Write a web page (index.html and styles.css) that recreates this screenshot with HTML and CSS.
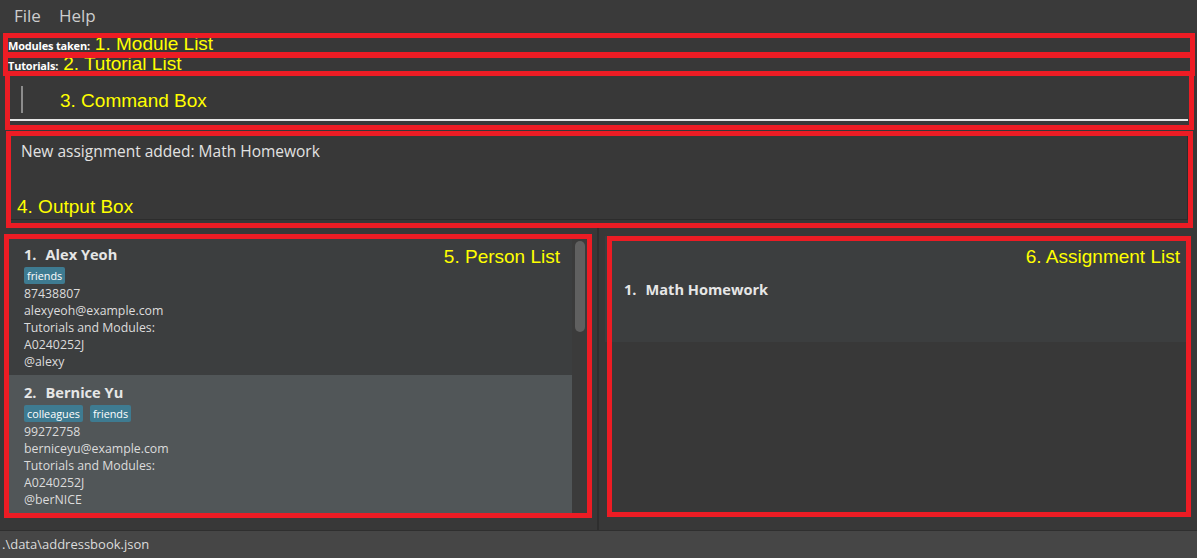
FILE: index.html
```html
<!DOCTYPE html>
<html lang="en">
<head>
<meta charset="utf-8">
<title>Address Book</title>
<link rel="stylesheet" href="styles.css">
</head>
<body>
<div class="app">
  <div class="menubar">
    <span class="menu-item">File</span>
    <span class="menu-item">Help</span>
  </div>

  <div class="info">
    <div class="info-row"><span class="info-key">Modules taken:</span><span class="note note-inline">1. Module List</span></div>
    <div class="info-row"><span class="info-key">Tutorials:</span><span class="note note-inline">2. Tutorial List</span></div>
  </div>

  <div class="command-section">
    <div class="command-field">
      <span class="caret"></span>
      <span class="note note-command">3. Command Box</span>
    </div>
  </div>

  <div class="result-section">
    <div class="result-box">
      <div class="result-text">New assignment added: Math Homework</div>
      <span class="note note-output">4. Output Box</span>
    </div>
  </div>

  <div class="split">
    <div class="pane pane-left">
      <div class="list">
        <div class="cards">
          <div class="card card-even">
            <div class="card-head">
              <div class="card-name"><span class="card-index">1.</span><span>Alex Yeoh</span></div>
              <span class="note note-head">5. Person List</span>
            </div>
            <div class="tags"><span class="tag">friends</span></div>
            <div class="field">87438807</div>
            <div class="field">alexyeoh@example.com</div>
            <div class="field">Tutorials and Modules:</div>
            <div class="field">A0240252J</div>
            <div class="field">@alexy</div>
          </div>
          <div class="card card-odd">
            <div class="card-head">
              <div class="card-name"><span class="card-index">2.</span><span>Bernice Yu</span></div>
            </div>
            <div class="tags"><span class="tag">colleagues</span><span class="tag">friends</span></div>
            <div class="field">99272758</div>
            <div class="field">berniceyu@example.com</div>
            <div class="field">Tutorials and Modules:</div>
            <div class="field">A0240252J</div>
            <div class="field">@berNICE</div>
          </div>
        </div>
        <div class="scrollbar"><div class="thumb"></div></div>
      </div>
    </div>
    <div class="divider"></div>
    <div class="pane pane-right">
      <div class="assign-card">
        <span class="note note-assign">6. Assignment List</span>
        <div class="card-name assign-name"><span class="card-index">1.</span><span>Math Homework</span></div>
      </div>
    </div>
  </div>

  <div class="statusbar">.\data\addressbook.json</div>

  <div class="callouts">
    <div class="callout callout-1"></div>
    <div class="callout callout-2"></div>
    <div class="callout callout-3"></div>
    <div class="callout callout-4"></div>
    <div class="callout callout-5"></div>
    <div class="callout callout-6"></div>
  </div>
</div>
</body>
</html>
```

FILE: styles.css
```css
* { box-sizing: border-box; }

html, body {
  margin: 0;
  padding: 0;
  background: #383838;
}

body {
  font-family: "Open Sans", "Noto Sans", sans-serif;
  color: #dcdcdc;
}

.app {
  position: relative;
  width: 1197px;
  height: 558px;
  overflow: hidden;
  display: flex;
  flex-direction: column;
  background: #383838;
}

/* menu */
.menubar {
  height: 32px;
  flex: 0 0 32px;
  display: flex;
  align-items: center;
  padding-left: 14px;
  gap: 18px;
  background: #3a3a3a;
}
.menu-item {
  font-size: 17px;
  color: #cdcdcd;
  line-height: 20px;
}

/* annotation text */
.note {
  font-family: "Liberation Sans", Arial, sans-serif;
  font-size: 19px;
  line-height: 20px;
  color: #ffff00;
  white-space: nowrap;
}

/* info rows */
.info {
  padding: 2px 8px 0 8px;
  flex: 0 0 42px;
}
.info-row {
  height: 20px;
  display: flex;
  align-items: baseline;
  line-height: 20px;
}
.info-key {
  font-size: 11px;
  font-weight: 700;
  color: #ffffff;
  letter-spacing: -0.2px;
}
.note-inline { margin-left: 5px; }

/* command box */
.command-section {
  flex: 0 0 54px;
  padding: 10px 9px 7px 10px;
}
.command-field {
  height: 37px;
  display: flex;
  align-items: flex-start;
  padding-left: 11px;
  border-bottom: 2px solid #e6e6e6;
}
.caret {
  width: 2px;
  height: 27px;
  margin-top: 2px;
  background: #8c8c8c;
}
.note-command {
  margin-left: 37px;
  margin-top: 7px;
}

/* result box */
.result-section {
  flex: 0 0 100px;
  padding: 6px 9px 8px 10px;
}
.result-box {
  height: 86px;
  display: flex;
  flex-direction: column;
  justify-content: space-between;
  padding: 7px 10px 2px 11px;
  border-right: 1px solid #2c2c2c;
  border-bottom: 1px solid #2c2c2c;
}
.result-text {
  font-size: 15.5px;
  line-height: 20px;
  color: #e2e2e2;
}
.note-output { margin-left: -4px; }

/* split */
.split {
  flex: 1 1 auto;
  display: flex;
  min-height: 0;
}
.pane { height: 100%; }
.pane-left {
  width: 597px;
  padding: 9px 10px 17px 8px;
}
.divider {
  width: 2px;
  background: #2e2e2e;
}
.pane-right {
  flex: 1 1 auto;
  padding: 8px 7px 0 6px;
}

.list {
  display: flex;
  height: 276px;
  overflow: hidden;
}
.cards {
  flex: 1 1 auto;
  display: flex;
  flex-direction: column;
}
.card {
  height: 138px;
  flex: 0 0 138px;
  padding: 7px 12px 5px 16px;
}
.card-even { background: #3c3e3f; }
.card-odd { background: #515658; }

.card-head {
  display: flex;
  justify-content: space-between;
  align-items: flex-start;
  height: 20px;
}
.card-name {
  font-size: 14.6px;
  font-weight: 700;
  line-height: 20px;
  color: #e6e6e6;
  display: flex;
}
.card-index { margin-right: 9px; }
.note-head { margin-top: 3px; }

.tags {
  display: flex;
  gap: 7px;
  margin-top: 3px;
  height: 17px;
  margin-bottom: 1px;
}
.tag {
  height: 17px;
  line-height: 17px;
  padding: 0 3px;
  background: #3e7b91;
  color: #ffffff;
  font-size: 10.8px;
  border-radius: 2px;
}
.field {
  font-size: 12.3px;
  line-height: 17px;
  height: 17px;
  color: #dcdcdc;
  white-space: nowrap;
}

.scrollbar {
  flex: 0 0 15px;
  background: #3b3b3b;
  padding: 4px 2px 0 3px;
}
.thumb {
  height: 91px;
  width: 10px;
  border-radius: 5px;
  background: #606060;
}

.assign-card {
  height: 106px;
  background: #3c3e3f;
  display: flex;
  flex-direction: column;
  padding: 11px 10px 0 19px;
}
.note-assign { align-self: flex-end; }
.assign-name { margin-top: 12px; }

/* status bar */
.statusbar {
  flex: 0 0 28px;
  height: 28px;
  border-top: 1px solid #2f2f2f;
  background: #464646;
  padding-left: 2px;
  font-size: 13px;
  line-height: 27px;
  color: #dcdcdc;
}

/* annotation boxes overlaid on the screenshot */
.callouts {
  position: absolute;
  inset: 0;
  pointer-events: none;
}
.callout {
  position: absolute;
  border: 5px solid #ed1c24;
}
.callout-1 { left: 3px; top: 33px; width: 1192px; height: 25px; }
.callout-2 { left: 3px; top: 52px; width: 1192px; height: 24px; }
.callout-3 { left: 5px; top: 71px; width: 1189px; height: 59px; }
.callout-4 { left: 6px; top: 131px; width: 1187px; height: 97px; }
.callout-5 { left: 4px; top: 234px; width: 588px; height: 284px; }
.callout-6 { left: 607px; top: 236px; width: 584px; height: 281px; }
```
